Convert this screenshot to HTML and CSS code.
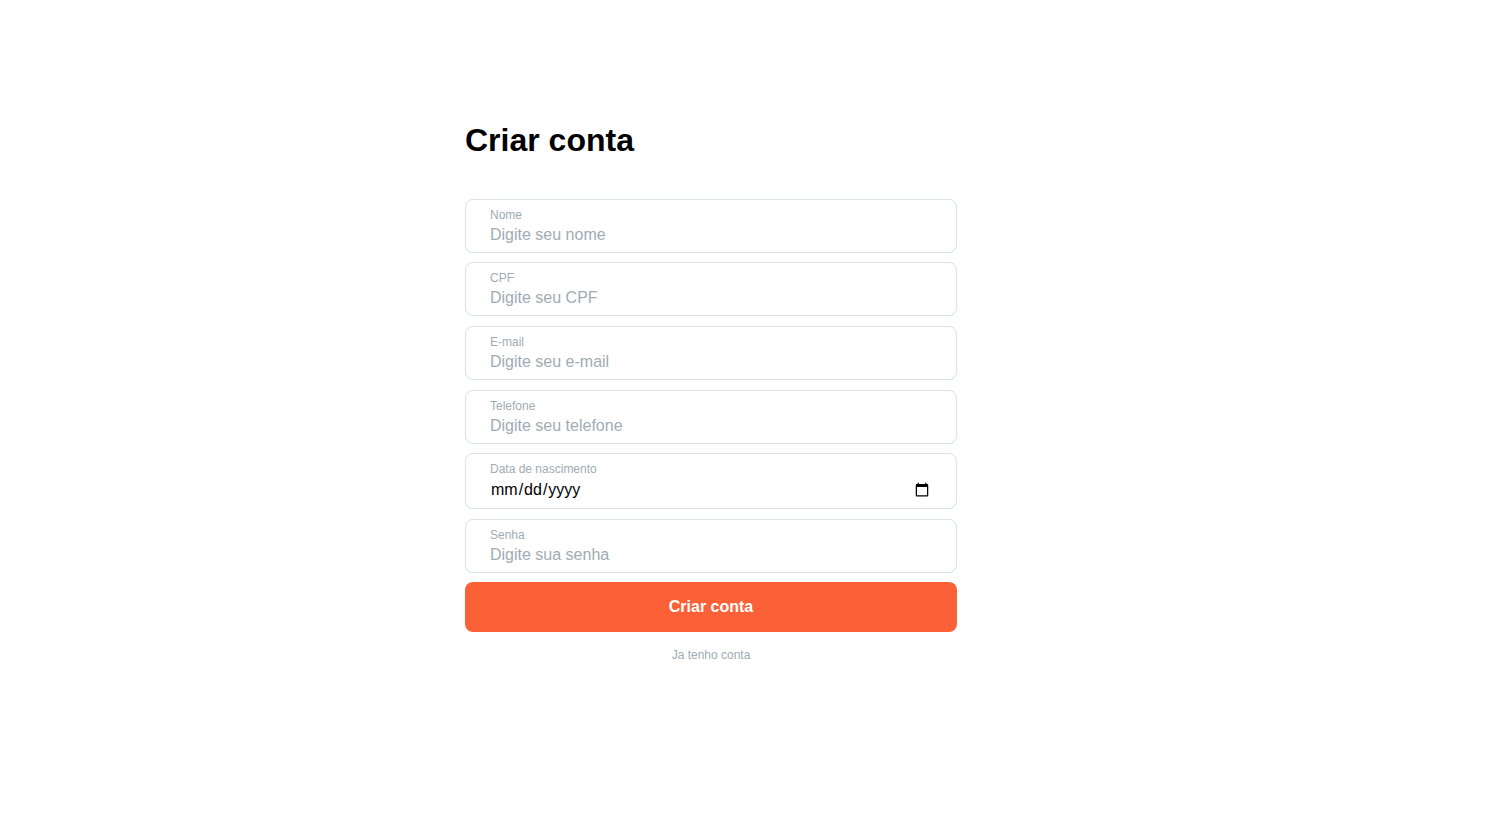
FILE: index.html
```html
<!DOCTYPE html>
<html lang="pt-BR">
<head>
<meta charset="utf-8">
<title>Criar conta</title>
<link rel="stylesheet" href="styles.css">
</head>
<body>
<main class="page">
  <h1 class="title">Criar conta</h1>
  <form class="form">
    <label class="field"><span class="label">Nome</span><input class="input" type="text" placeholder="Digite seu nome"></label>
    <label class="field"><span class="label">CPF</span><input class="input" type="text" placeholder="Digite seu CPF"></label>
    <label class="field"><span class="label">E-mail</span><input class="input" type="email" placeholder="Digite seu e-mail"></label>
    <label class="field"><span class="label">Telefone</span><input class="input" type="tel" placeholder="Digite seu telefone"></label>
    <label class="field field-date"><span class="label">Data de nascimento</span><input class="input" type="date" lang="en-US"></label>
    <label class="field"><span class="label">Senha</span><input class="input" type="password" placeholder="Digite sua senha"></label>
    <button class="submit" type="button">Criar conta</button>
  </form>
  <a class="login">Ja tenho conta</a>
</main>
</body>
</html>
```

FILE: styles.css
```css
* { box-sizing: border-box; margin: 0; padding: 0; }
body { background: #fff; font-family: "Liberation Sans", Arial, sans-serif; }
.page { width: 492px; margin-left: 465px; padding-top: 121.8px; display: flex; flex-direction: column; }
.title { font-size: 32px; line-height: 37px; color: #000; margin-bottom: 40px; }
.form { display: flex; flex-direction: column; gap: 9.6px; }
.field { display: flex; flex-direction: column; height: 54px; padding: 8px 24px; border: 1px solid #dae2e5; border-radius: 8px; background: #fff; }
.field-date { height: 56px; }
.label { font-size: 12px; line-height: 14px; color: #a0acb3; margin-bottom: 4px; }
.input { width: 100%; border: 0; outline: 0; background: transparent; font-family: inherit; font-size: 16px; line-height: normal; color: #000; }
.input::placeholder { color: #a0acb3; }
.submit { height: 50px; border: 0; border-radius: 8px; background: #fc6036; color: #fff; font-family: inherit; font-size: 16px; font-weight: 700; }
.login { margin-top: 16px; text-align: center; font-size: 12px; line-height: 14px; color: #a0acb3; }
```
